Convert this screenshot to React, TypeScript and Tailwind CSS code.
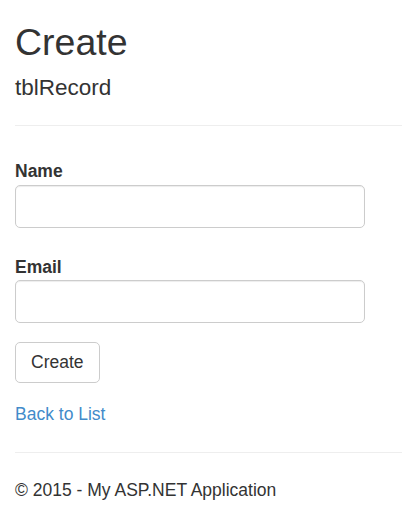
import React from 'react';

const App: React.FC = () => {
  return (
    <div className="min-h-[520px] bg-white pl-[15px] text-[#333] font-['Liberation_Sans',Arial,sans-serif] text-[17.5px]">
      <h2 className="mt-[21px] text-[37.5px] leading-[42px] font-normal">Create</h2>
      <form onSubmit={(e) => e.preventDefault()}>
        <h4 className="mt-[12px] text-[22.5px] leading-[25px] font-normal">tblRecord</h4>
        <hr className="mt-[25px] border-0 border-t border-[#eee]" />
        <div>
          <label className="mt-[32px] block font-bold leading-[26px]">Name</label>
          <input
            type="text"
            className="mt-[1px] block h-[43px] w-[350px] rounded-[5px] border border-[#ccc] px-[15px] shadow-[inset_0_1px_1px_rgba(0,0,0,0.075)] outline-none"
          />
        </div>
        <div>
          <label className="mt-[26px] block font-bold leading-[26px]">Email</label>
          <input
            type="text"
            className="block h-[43px] w-[350px] rounded-[5px] border border-[#ccc] px-[15px] shadow-[inset_0_1px_1px_rgba(0,0,0,0.075)] outline-none"
          />
        </div>
        <button
          type="submit"
          className="mt-[19px] block rounded-[5px] border border-[#ccc] bg-white px-[15px] py-[7px] leading-[25px] text-[#333]"
        >
          Create
        </button>
      </form>
      <div className="mt-[18px] leading-[26px]">
        <a href="#" className="text-[#428bca]">Back to List</a>
      </div>
      <hr className="mt-[25px] border-0 border-t border-[#eee]" />
      <footer>
        <p className="mt-[24px] leading-[26px]">© 2015 - My ASP.NET Application</p>
      </footer>
    </div>
  );
};

export default App;
